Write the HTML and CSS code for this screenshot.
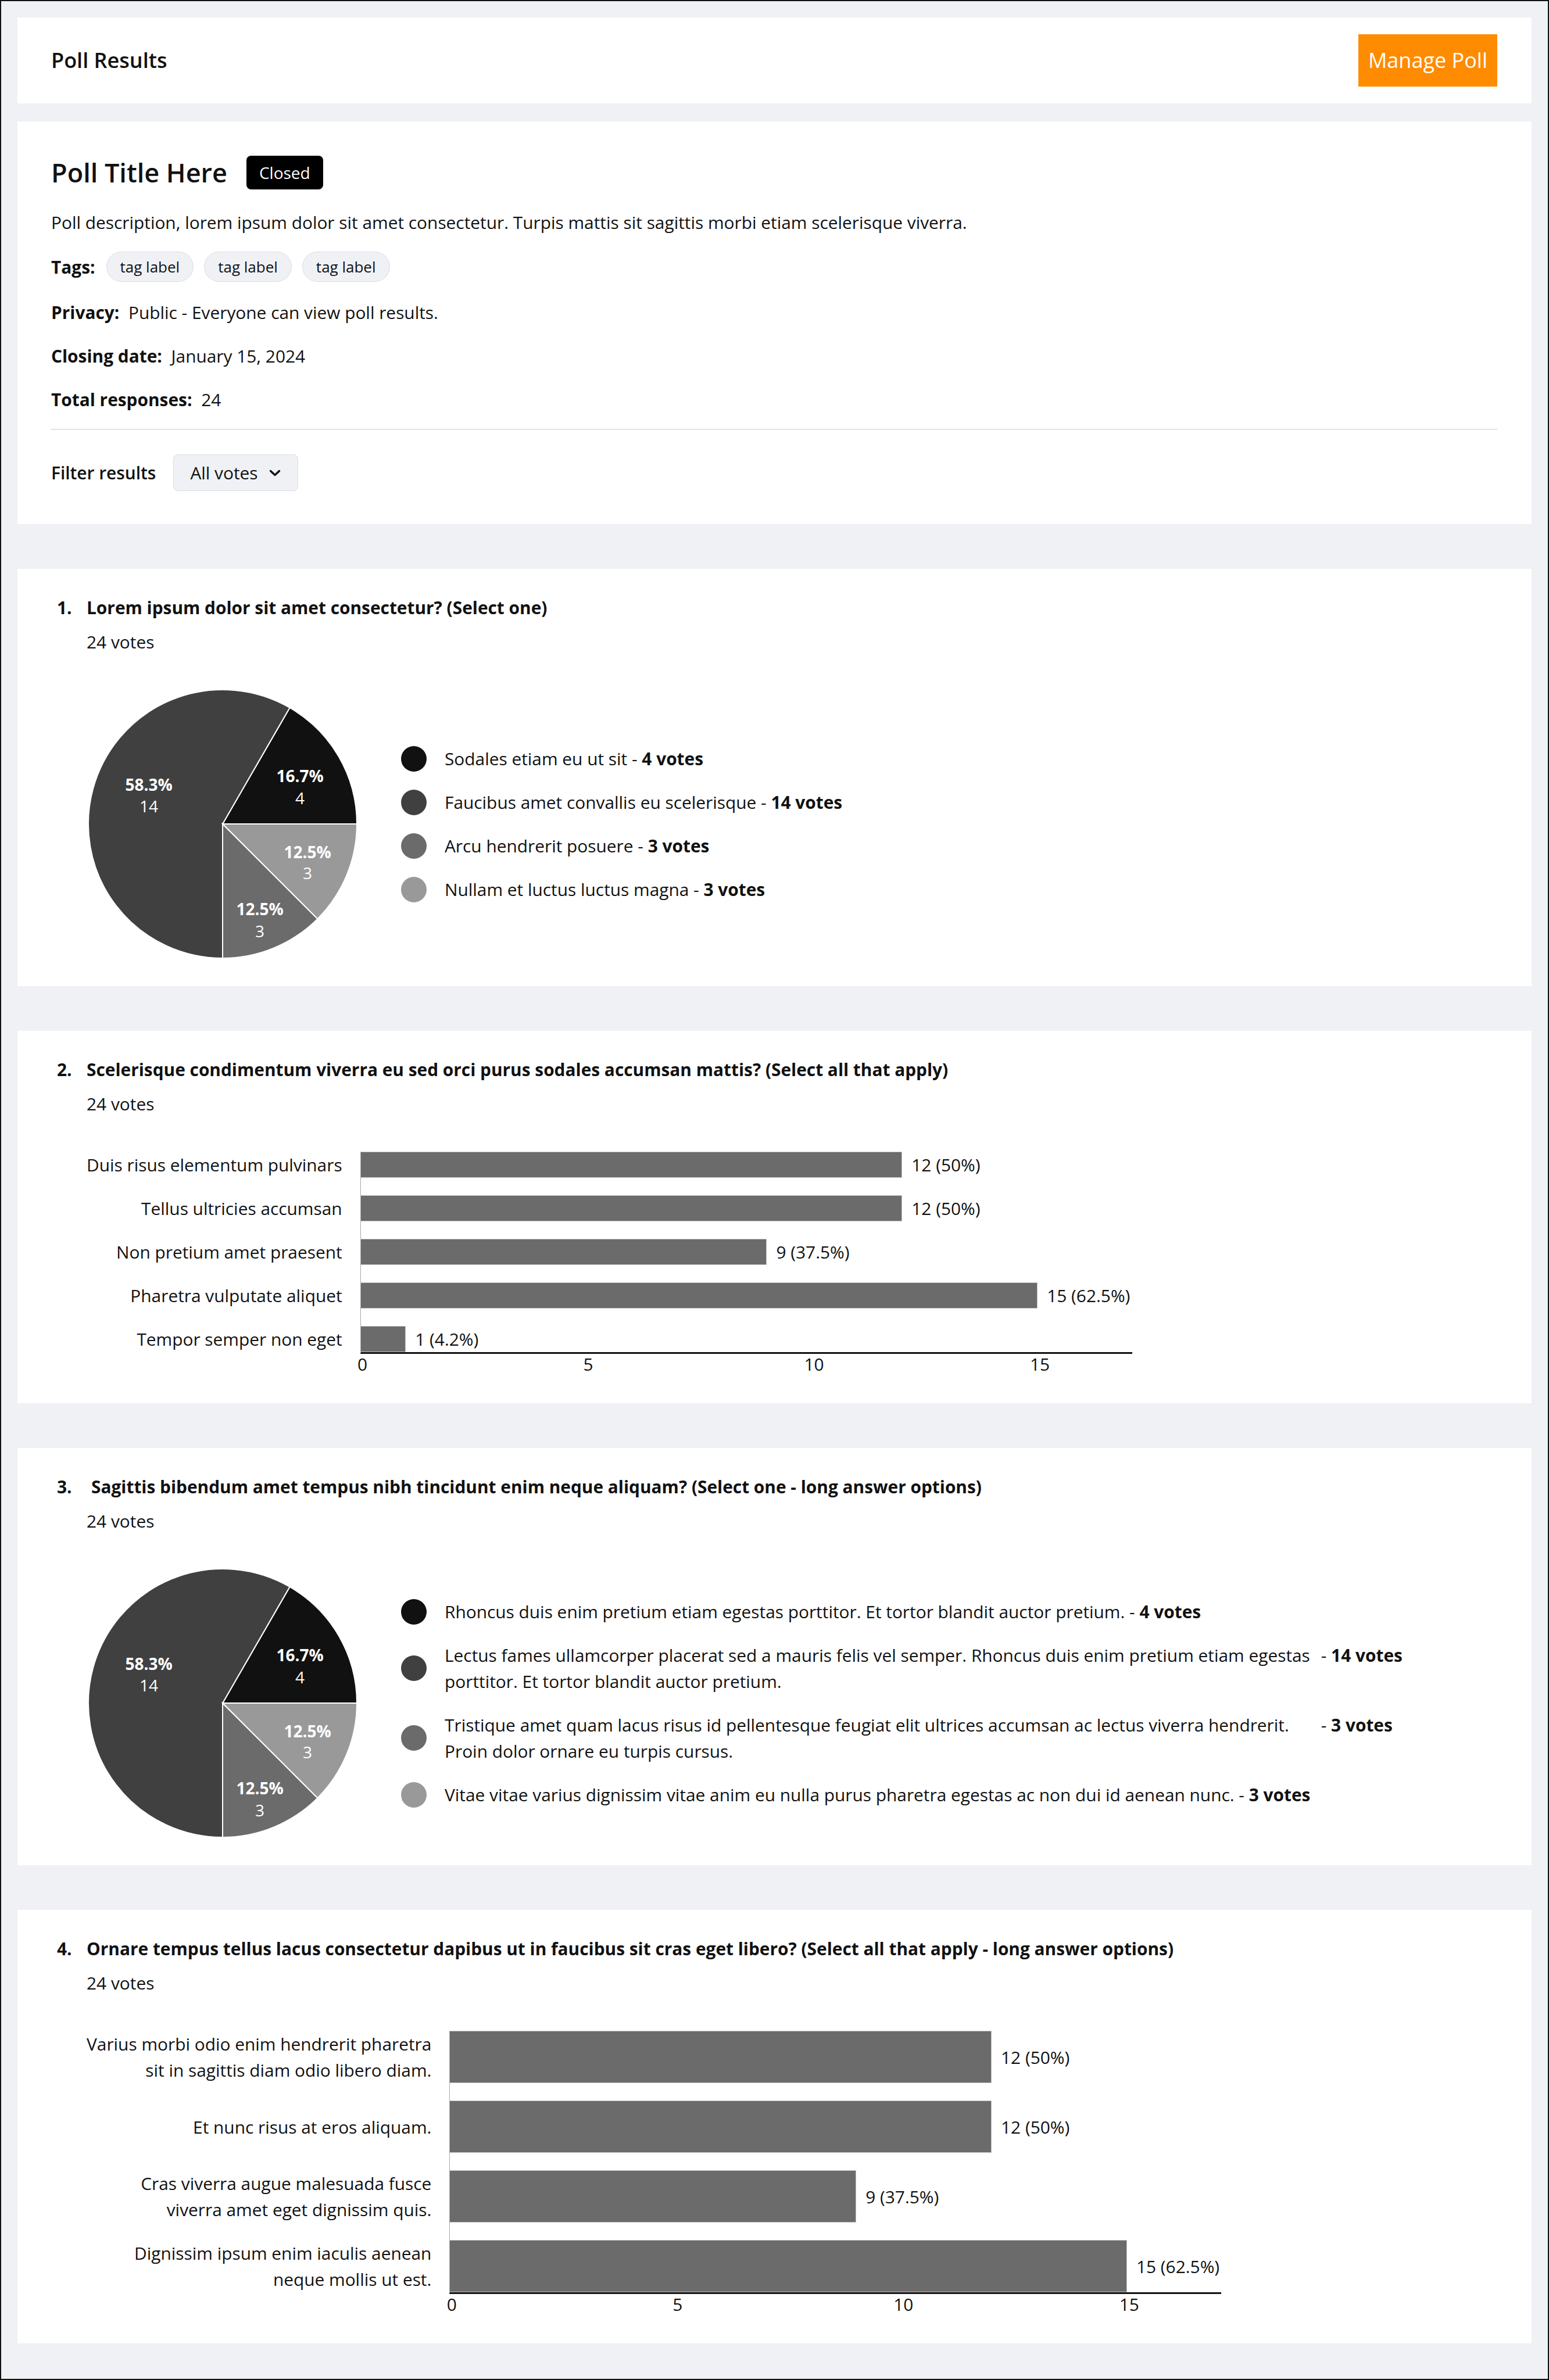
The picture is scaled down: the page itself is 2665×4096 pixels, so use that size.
FILE: index.html
```html
<!DOCTYPE html>
<html lang="en">
<head>
<meta charset="utf-8">
<title>Poll Results</title>
<link rel="stylesheet" href="styles.css">
</head>
<body>
<div class="frame">
  <header class="card topbar">
    <h1 class="page-title">Poll Results</h1>
    <button class="btn-manage">Manage Poll</button>
  </header>

  <section class="card info">
    <div class="title-row">
      <h2 class="poll-title">Poll Title Here</h2>
      <span class="badge">Closed</span>
    </div>
    <p class="desc">Poll description, lorem ipsum dolor sit amet consectetur. Turpis mattis sit sagittis morbi etiam scelerisque viverra.</p>
    <div class="tags-row">
      <b class="lbl">Tags:</b>
      <span class="chip">tag label</span>
      <span class="chip">tag label</span>
      <span class="chip">tag label</span>
    </div>
    <p class="meta"><b class="lbl">Privacy:</b> Public - Everyone can view poll results.</p>
    <p class="meta"><b class="lbl">Closing date:</b> January 15, 2024</p>
    <p class="meta"><b class="lbl">Total responses:</b> 24</p>
    <hr class="divider">
    <div class="filter-row">
      <span class="filter-label">Filter results</span>
      <span class="dropdown">All votes<svg class="chev" width="20" height="12" viewBox="0 0 20 12"><path d="M2.5 2.5 L10 9.5 L17.5 2.5" fill="none" stroke="#111" stroke-width="3.5" stroke-linecap="round" stroke-linejoin="round"/></svg></span>
    </div>
  </section>

  <section class="card q q-pie">
    <span class="qnum">1.</span>
    <h3 class="qtitle">Lorem ipsum dolor sit amet consectetur? (Select one)</h3>
    <p class="votes">24 votes</p>
    <div class="pie-row">
      <svg class="pie" width="468" height="468" viewBox="0 0 468 468">
        <path d="M234,234 L465,234 A231,231 0 0 0 349.5,33.95 Z" fill="#111111" stroke="#fff" stroke-width="2"/>
        <path d="M234,234 L349.5,33.95 A231,231 0 1 0 234,465 Z" fill="#404040" stroke="#fff" stroke-width="2"/>
        <path d="M234,234 L234,465 A231,231 0 0 0 397.34,397.34 Z" fill="#6b6b6b" stroke="#fff" stroke-width="2"/>
        <path d="M234,234 L397.34,397.34 A231,231 0 0 0 465,234 Z" fill="#999999" stroke="#fff" stroke-width="2"/>
        <text class="pl-pct" x="367" y="151">16.7%</text><text class="pl-n" x="367" y="189">4</text>
        <text class="pl-pct" x="107" y="166">58.3%</text><text class="pl-n" x="107" y="203">14</text>
        <text class="pl-pct" x="380" y="282">12.5%</text><text class="pl-n" x="380" y="318">3</text>
        <text class="pl-pct" x="298" y="380">12.5%</text><text class="pl-n" x="298" y="418">3</text>
      </svg>
      <ul class="legend">
        <li><span class="dot c1"></span><span class="lg-text">Sodales etiam eu ut sit</span><span class="lg-votes"> - <b>4 votes</b></span></li>
        <li><span class="dot c2"></span><span class="lg-text">Faucibus amet convallis eu scelerisque</span><span class="lg-votes"> - <b>14 votes</b></span></li>
        <li><span class="dot c3"></span><span class="lg-text">Arcu hendrerit posuere</span><span class="lg-votes"> - <b>3 votes</b></span></li>
        <li><span class="dot c4"></span><span class="lg-text">Nullam et luctus luctus magna</span><span class="lg-votes"> - <b>3 votes</b></span></li>
      </ul>
    </div>
  </section>

  <section class="card q q-bar">
    <span class="qnum">2.</span>
    <h3 class="qtitle">Scelerisque condimentum viverra eu sed orci purus sodales accumsan mattis? (Select all that apply)</h3>
    <p class="votes">24 votes</p>
    <div class="barchart">
      <div class="bar-labels">
        <div class="blabel">Duis risus elementum pulvinars</div>
        <div class="blabel">Tellus ultricies accumsan</div>
        <div class="blabel">Non pretium amet praesent</div>
        <div class="blabel">Pharetra vulputate aliquet</div>
        <div class="blabel">Tempor semper non eget</div>
      </div>
      <div class="plot">
        <div class="brow"><span class="bar" style="width:70.21%"></span><span class="bval">12 (50%)</span></div>
        <div class="brow"><span class="bar" style="width:70.21%"></span><span class="bval">12 (50%)</span></div>
        <div class="brow"><span class="bar" style="width:52.66%"></span><span class="bval">9 (37.5%)</span></div>
        <div class="brow"><span class="bar" style="width:87.76%"></span><span class="bval">15 (62.5%)</span></div>
        <div class="brow"><span class="bar" style="width:5.85%"></span><span class="bval">1 (4.2%)</span></div>
      </div>
      <div class="ticks"><span>0</span><span>5</span><span>10</span><span>15</span></div>
    </div>
  </section>

  <section class="card q q-pie">
    <span class="qnum">3.</span>
    <h3 class="qtitle wide-gap">Sagittis bibendum amet tempus nibh tincidunt enim neque aliquam? (Select one - long answer options)</h3>
    <p class="votes">24 votes</p>
    <div class="pie-row">
      <svg class="pie" width="468" height="468" viewBox="0 0 468 468">
        <path d="M234,234 L465,234 A231,231 0 0 0 349.5,33.95 Z" fill="#111111" stroke="#fff" stroke-width="2"/>
        <path d="M234,234 L349.5,33.95 A231,231 0 1 0 234,465 Z" fill="#404040" stroke="#fff" stroke-width="2"/>
        <path d="M234,234 L234,465 A231,231 0 0 0 397.34,397.34 Z" fill="#6b6b6b" stroke="#fff" stroke-width="2"/>
        <path d="M234,234 L397.34,397.34 A231,231 0 0 0 465,234 Z" fill="#999999" stroke="#fff" stroke-width="2"/>
        <text class="pl-pct" x="367" y="151">16.7%</text><text class="pl-n" x="367" y="189">4</text>
        <text class="pl-pct" x="107" y="166">58.3%</text><text class="pl-n" x="107" y="203">14</text>
        <text class="pl-pct" x="380" y="282">12.5%</text><text class="pl-n" x="380" y="318">3</text>
        <text class="pl-pct" x="298" y="380">12.5%</text><text class="pl-n" x="298" y="418">3</text>
      </svg>
      <ul class="legend">
        <li><span class="dot c1"></span><span class="lg-text">Rhoncus duis enim pretium etiam egestas porttitor. Et tortor blandit auctor pretium.</span><span class="lg-votes"> - <b>4 votes</b></span></li>
        <li><span class="dot c2"></span><span class="lg-text">Lectus fames ullamcorper placerat sed a mauris felis vel semper. Rhoncus duis enim pretium etiam egestas porttitor. Et tortor blandit auctor pretium.</span><span class="lg-votes"> - <b>14 votes</b></span></li>
        <li><span class="dot c3"></span><span class="lg-text">Tristique amet quam lacus risus id pellentesque feugiat elit ultrices accumsan ac lectus viverra hendrerit. Proin dolor ornare eu turpis cursus.</span><span class="lg-votes"> - <b>3 votes</b></span></li>
        <li><span class="dot c4"></span><span class="lg-text">Vitae vitae varius dignissim vitae anim eu nulla purus pharetra egestas ac non dui id aenean nunc.</span><span class="lg-votes"> - <b>3 votes</b></span></li>
      </ul>
    </div>
  </section>

  <section class="card q q-bar">
    <span class="qnum">4.</span>
    <h3 class="qtitle">Ornare tempus tellus lacus consectetur dapibus ut in faucibus sit cras eget libero? (Select all that apply - long answer options)</h3>
    <p class="votes">24 votes</p>
    <div class="barchart tall">
      <div class="bar-labels">
        <div class="blabel">Varius morbi odio enim hendrerit pharetra<br>sit in sagittis diam odio libero diam.</div>
        <div class="blabel">Et nunc risus at eros aliquam.</div>
        <div class="blabel">Cras viverra augue malesuada fusce<br>viverra amet eget dignissim quis.</div>
        <div class="blabel">Dignissim ipsum enim iaculis aenean<br>neque mollis ut est.</div>
      </div>
      <div class="plot">
        <div class="brow"><span class="bar" style="width:70.21%"></span><span class="bval">12 (50%)</span></div>
        <div class="brow"><span class="bar" style="width:70.21%"></span><span class="bval">12 (50%)</span></div>
        <div class="brow"><span class="bar" style="width:52.66%"></span><span class="bval">9 (37.5%)</span></div>
        <div class="brow"><span class="bar" style="width:87.76%"></span><span class="bval">15 (62.5%)</span></div>
      </div>
      <div class="ticks"><span>0</span><span>5</span><span>10</span><span>15</span></div>
    </div>
  </section>
</div>
</body>
</html>
```

FILE: styles.css
```css
* { box-sizing: border-box; }
html, body { margin: 0; padding: 0; }
body {
  font-family: "Open Sans", "Noto Sans", "Liberation Sans", sans-serif;
  color: #111;
  font-size: 29.85px;
  line-height: 45px;
}
.frame {
  min-height: 4096px;
  border: 2px solid #111;
  background: #f0f1f5;
  padding: 28px;
  display: flex;
  flex-direction: column;
}
.card { background: #fff; }

/* header */
.topbar {
  display: flex;
  justify-content: space-between;
  align-items: center;
  padding: 29px 59px 29px 58px;
}
.page-title {
  margin: 0;
  font-size: 36px;
  line-height: 54px;
  font-weight: 600;
}
.btn-manage {
  font-family: inherit;
  font-size: 36px;
  line-height: 54px;
  padding: 18px 17px;
  border: 0;
  border-radius: 0;
  background: #ff8b00;
  color: #fff;
}

/* info card */
.info {
  margin-top: 31px;
  padding: 58px 59px 57px 58px;
}
.title-row { display: flex; align-items: center; height: 60px; }
.poll-title { margin: 0; font-size: 45px; line-height: 60px; font-weight: 600; }
.badge {
  margin-left: 33px;
  background: #000;
  color: #fff;
  font-size: 28px;
  line-height: 36px;
  padding: 11px 22px;
  border-radius: 8px;
}
.desc { margin: 33px 0 0; }
.tags-row { display: flex; align-items: center; margin-top: 28px; gap: 18px; }
.lbl { font-weight: 700; margin-right: 8px; }
.tags-row .lbl { margin-right: 1px; }
.chip {
  font-size: 26px;
  line-height: 36px;
  padding: 7px 23px;
  border: 1px solid #dcdde3;
  border-radius: 999px;
  background: #f0f1f5;
}
.meta { margin: 30px 0 0; }
.divider { margin: 28px 0 0; border: 0; height: 2px; background: #e3e3e6; }
.filter-row { display: flex; align-items: center; margin-top: 42px; }
.filter-label { font-weight: 600; }
.dropdown {
  margin-left: 30px;
  display: flex;
  align-items: center;
  padding: 8px 29px 8px 28px;
  border: 1px solid #dcdde3;
  border-radius: 8px;
  background: #f0f1f5;
}
.chev { margin-left: 19px; }

/* question cards */
.q {
  margin-top: 77px;
  display: grid;
  grid-template-columns: 51px 1fr;
  padding: 44px 60px 45px 68px;
}
.q-bar { padding-bottom: 40px; }
.qnum { grid-column: 1; grid-row: 1; font-weight: 700; }
.qtitle { grid-column: 2; grid-row: 1; margin: 0; font-size: 29.85px; line-height: 45px; font-weight: 700; }
.qtitle.wide-gap { padding-left: 8px; }
.votes { grid-column: 2; margin: 14px 0 0; }

/* pie */
.pie-row { grid-column: 2; display: flex; align-items: center; margin-top: 57px; }
.pie { display: block; flex: none; }
.pl-pct { font-family: "Open Sans", sans-serif; font-size: 28px; font-weight: 700; fill: #fff; text-anchor: middle; dominant-baseline: central; }
.pl-n { font-family: "Open Sans", sans-serif; font-size: 28px; font-weight: 400; fill: #fff; text-anchor: middle; dominant-baseline: central; }
.legend { list-style: none; margin: 0 0 0 73px; padding: 0; display: flex; flex-direction: column; gap: 30px; }
.legend li { display: flex; align-items: center; }
.dot { flex: none; width: 44px; height: 44px; border-radius: 50%; margin-right: 31px; }
.c1 { background: #111111; }
.c2 { background: #404040; }
.c3 { background: #6b6b6b; }
.c4 { background: #999999; }
.lg-text { max-width: 1500px; }
.lg-votes { flex: none; white-space: pre; align-self: flex-start; }
.lg-votes b { font-weight: 700; }

/* bar chart */
.barchart {
  grid-column: 2;
  margin-top: 60px;
  display: grid;
  grid-template-columns: max-content 1328px;
  column-gap: 31px;
}
.bar-labels { display: flex; flex-direction: column; gap: 30px; text-align: right; }
.blabel { height: 45px; display: flex; align-items: center; justify-content: flex-end; }
.plot {
  display: flex;
  flex-direction: column;
  gap: 30px;
  border-left: 1px solid #a8a8a8;
  border-bottom: 3px solid #111;
}
.brow { height: 45px; display: flex; align-items: center; }
.bar {
  height: 100%;
  background: #6b6b6b;
  border: 1px solid #c4c4c4;
  border-left: 0;
}
.bval { margin-left: 16px; white-space: nowrap; }
.tall .blabel, .tall .brow { height: 90px; }
.ticks {
  grid-column: 2;
  display: flex;
  gap: 288.5px;
  margin: -5px 0 5px -46px;
}
.ticks span { width: 100px; text-align: center; flex: none; }
```
